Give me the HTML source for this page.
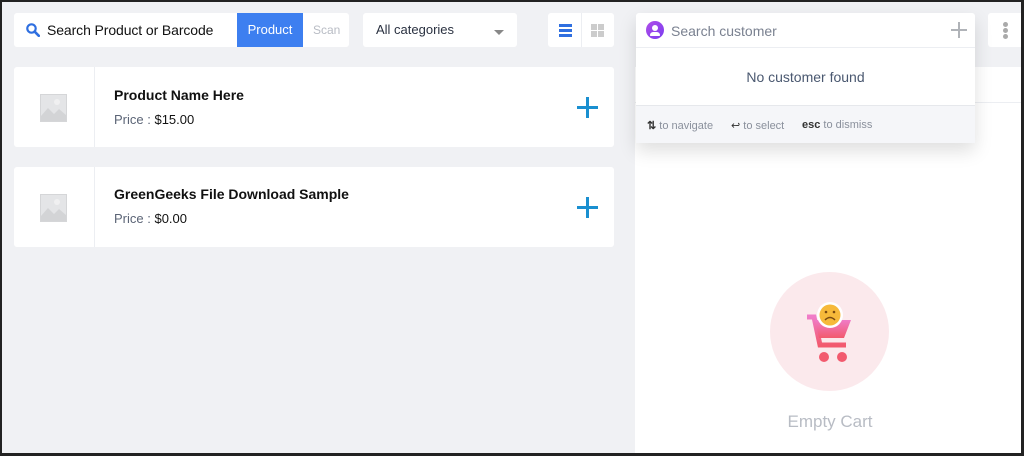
<!DOCTYPE html>
<html><head><style>
*{box-sizing:border-box;margin:0;padding:0}
body{width:1024px;height:456px;overflow:hidden;background:#222;font-family:"Liberation Sans",sans-serif;position:relative}
.frame{position:absolute;left:2px;top:2px;width:1019px;height:451px;background:#f0f1f4;overflow:hidden}
.abs{position:absolute}
.w{background:#fff;border-radius:3px}
</style></head><body>
<div class="frame">
 <div class="abs w" style="left:12px;top:11px;width:335px;height:34px;overflow:hidden">
  <svg class="abs" style="left:12px;top:10px" width="14" height="14" viewBox="0 0 14 14"><circle cx="5.5" cy="5.5" r="4.2" fill="none" stroke="#2f6fe0" stroke-width="2.2"/><path d="M8.6 8.6L12.8 12.8" stroke="#2f6fe0" stroke-width="2.6" stroke-linecap="round"/></svg>
  <div class="abs" style="left:33px;top:9px;font-size:14px;color:#111;letter-spacing:-0.1px">Search Product or Barcode</div>
  <div class="abs" style="left:223px;top:0;width:66px;height:34px;background:#3d7ff0;color:#fff;font-size:13px;line-height:34px;text-align:center">Product</div>
  <div class="abs" style="left:299px;top:10px;font-size:12px;color:#b8bcc4">Scan</div>
 </div>
 <div class="abs w" style="left:361px;top:11px;width:154px;height:34px">
  <div class="abs" style="left:13px;top:9px;font-size:13px;color:#2a3140">All categories</div>
  <div class="abs" style="left:131px;top:17px;width:0;height:0;border-left:5px solid transparent;border-right:5px solid transparent;border-top:5px solid #888"></div>
 </div>
 <div class="abs w" style="left:546px;top:11px;width:66px;height:34px">
  <div class="abs" style="left:33px;top:0;width:1px;height:34px;background:#eceef2"></div>
  <div class="abs" style="left:11px;top:11px;width:13px;height:3px;background:#2f6fe0;box-shadow:0 5px 0 #2f6fe0,0 10px 0 #2f6fe0"></div>
  <div class="abs" style="left:43px;top:11px;width:6px;height:6px;background:#ccc;box-shadow:7px 0 0 #ccc,0 7px 0 #ccc,7px 7px 0 #ccc"></div>
 </div>
 <div class="abs w" style="left:12px;top:65px;width:600px;height:80px">
  <div class="abs" style="left:80px;top:0;width:1px;height:80px;background:#eceef2"></div>
  <svg class="abs" style="left:26px;top:27px" width="27" height="28" viewBox="0 0 27 28"><rect x="0.5" y="0.5" width="26" height="27" fill="#e4e5e7" stroke="#d5d6d8"/><path d="M1 22L8 14L14 20L19 15L26 21V27H1Z" fill="#d3d4d6"/><circle cx="17" cy="8" r="3" fill="#f0f0f1"/></svg>
  <div class="abs" style="left:100px;top:20px;font-size:14px;font-weight:bold;color:#111">Product Name Here</div>
  <div class="abs" style="left:100px;top:45px;font-size:13px;color:#5b6476">Price : <span style="color:#111">$15.00</span></div>
  <div class="abs" style="left:563px;top:39px;width:21px;height:3px;background:#1a8fd0"></div>
  <div class="abs" style="left:572px;top:30px;width:3px;height:21px;background:#1a8fd0"></div>
 </div>
 <div class="abs w" style="left:12px;top:165px;width:600px;height:80px">
  <div class="abs" style="left:80px;top:0;width:1px;height:80px;background:#eceef2"></div>
  <svg class="abs" style="left:26px;top:27px" width="27" height="28" viewBox="0 0 27 28"><rect x="0.5" y="0.5" width="26" height="27" fill="#e4e5e7" stroke="#d5d6d8"/><path d="M1 22L8 14L14 20L19 15L26 21V27H1Z" fill="#d3d4d6"/><circle cx="17" cy="8" r="3" fill="#f0f0f1"/></svg>
  <div class="abs" style="left:100px;top:19px;font-size:14px;font-weight:bold;color:#111">GreenGeeks File Download Sample</div>
  <div class="abs" style="left:100px;top:44px;font-size:13px;color:#5b6476">Price : <span style="color:#111">$0.00</span></div>
  <div class="abs" style="left:563px;top:39px;width:21px;height:3px;background:#1a8fd0"></div>
  <div class="abs" style="left:572px;top:30px;width:3px;height:21px;background:#1a8fd0"></div>
 </div>
 <div class="abs" style="left:633px;top:65px;width:390px;height:400px;background:#fff">
  <div class="abs" style="left:0;top:35px;width:390px;height:1px;background:#eceef2"></div>
 </div>
 <div class="abs w" style="left:986px;top:11px;width:40px;height:34px">
  <div class="abs" style="left:15px;top:9px;width:5px;height:5px;border-radius:50%;background:#aaa;box-shadow:0 6px 0 #aaa,0 12px 0 #aaa"></div>
 </div>
 <div class="abs" style="left:634px;top:11px;width:339px;height:130px;background:#fff;border-radius:3px;box-shadow:0 8px 18px rgba(0,0,0,.13)">
  <div class="abs" style="left:10px;top:8px;width:18px;height:18px;border-radius:50%;background:linear-gradient(135deg,#b04ee8,#7a3cf0)"></div>
  <div class="abs" style="left:16px;top:12px;width:6px;height:6px;border-radius:50%;background:#fff"></div>
  <div class="abs" style="left:14px;top:19px;width:10px;height:4px;border-radius:4px 4px 1px 1px;background:#fff"></div>
  <div class="abs" style="left:35px;top:10px;font-size:14px;color:#7a8190">Search customer</div>
  <div class="abs" style="left:315px;top:16px;width:16px;height:2px;background:#b0b3b8"></div>
  <div class="abs" style="left:322px;top:9px;width:2px;height:16px;background:#b0b3b8"></div>
  <div class="abs" style="left:0;top:34px;width:339px;height:1px;background:#eceef2"></div>
  <div class="abs" style="left:0;top:56px;width:339px;text-align:center;font-size:14px;color:#4a5870">No customer found</div>
  <div class="abs" style="left:0;top:92px;width:339px;height:38px;background:#f5f6f9;border-top:1px solid #e6e8ec;font-size:11px;color:#8a909c">
   <span class="abs" style="left:11px;top:13px"><b style="color:#333">⇅</b> to navigate</span>
   <span class="abs" style="left:95px;top:13px"><span style="color:#333">↩</span> to select</span>
   <span class="abs" style="left:166px;top:13px"><b style="color:#333">esc</b> to dismiss</span>
  </div>
 </div>
 <div class="abs" style="left:768px;top:270px;width:119px;height:119px;border-radius:50%;background:#fbe9ec"></div>
 <svg class="abs" style="left:803px;top:296px" width="50" height="66" viewBox="0 0 50 66">
  <defs><linearGradient id="g" x1="0" y1="0" x2="0" y2="1"><stop offset="0" stop-color="#f07cc8"/><stop offset="1" stop-color="#f25a6e"/></linearGradient></defs>
  <path d="M2 19H9L15 47H41" fill="none" stroke="url(#g)" stroke-width="5"/>
  <path d="M10 22H46L39 40H14Z" fill="url(#g)"/>
  <circle cx="19" cy="59" r="5" fill="#f25a6e"/><circle cx="37" cy="59" r="5" fill="#f25a6e"/>
  <circle cx="25" cy="17" r="13" fill="#fff"/><circle cx="25" cy="17" r="10.5" fill="#f6b93a"/>
  <circle cx="21" cy="14" r="1.3" fill="#7a4a10"/><circle cx="29" cy="14" r="1.3" fill="#7a4a10"/>
  <path d="M20 22Q25 17 30 22" fill="none" stroke="#7a4a10" stroke-width="1.5"/>
 </svg>
 <div class="abs" style="left:633px;top:410px;width:390px;text-align:center;font-size:17px;color:#b8bcc4">Empty Cart</div>
</div>
</body></html>
